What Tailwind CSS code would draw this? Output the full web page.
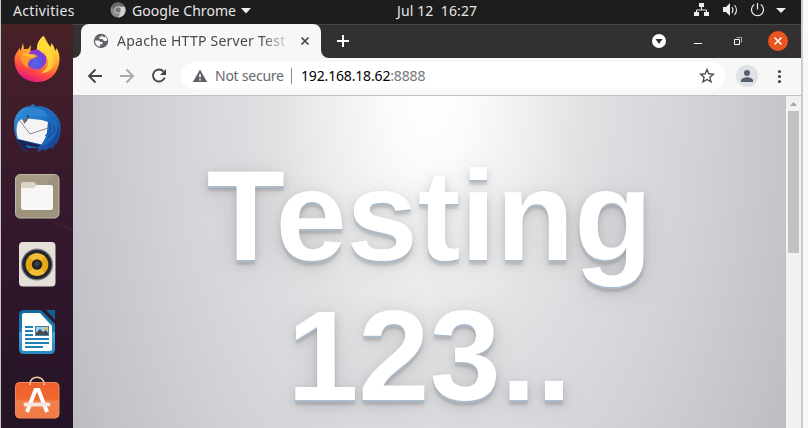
<!DOCTYPE html>
<html lang="en">
<head>
<meta charset="utf-8">
<title>Desktop</title>
<script src="https://cdn.jsdelivr.net/npm/@tailwindcss/browser@4"></script>
</head>
<body class="w-[808px] h-[428px] overflow-hidden bg-[#f8f8f8] font-['Noto_Sans','Open_Sans',sans-serif]">
<div class="w-[803px] h-[428px] flex flex-col border-l border-l-[#c3c7ca] border-r-2 border-r-[#cbcbcb] overflow-hidden">
  <header class="h-6 shrink-0 bg-[#1d1d1d] text-[#e6e6e6] text-[14px] leading-[21px] flex whitespace-pre">
    <span class="w-[97px] pl-3 tracking-[0.35px]">Activities</span>
    <div class="w-[299px] flex items-start pl-3">
      <svg class="w-4 h-4 mt-[2px] mr-[6px] shrink-0" viewBox="0 0 16 16"><circle cx="8" cy="8" r="7.5" fill="#8b8b8b"/><path d="M8 4.5h6.7A7.5 7.5 0 0 1 8 15.5l3.2-5.8Z" fill="#d0d0d0"/><path d="M1.5 4.2A7.5 7.5 0 0 1 14.7 4.5H8A3.6 3.6 0 0 0 4.9 9.8Z" fill="#686868"/><circle cx="8" cy="8" r="3.6" fill="#ddd"/><circle cx="8" cy="8" r="2.8" fill="#777"/></svg>
      <span class="w-[109px] tracking-[0.05px]">Google Chrome</span>
      <svg class="w-[10px] h-[6px] mt-[8px]" viewBox="0 0 10 6"><path d="M0 0h10L5 5.5z" fill="#eee"/></svg>
    </div>
    <span class="w-[296px] tracking-[0.1px]">Jul 12  16:27</span>
    <svg class="w-[106px] h-6 shrink-0" viewBox="693 0 106 24" fill="none" stroke="#eee">
      <path d="M701.5 6V10M696.500 13v-3h10v3" stroke-width="1"/><path d="M699 3h5v4h-5zM694 12h5v4h-5zM704 12h5v4h-5z" fill="#eee" stroke="none"/>
      <path d="M723 7h3l4-4v13l-4-4h-3z" fill="#eee" stroke="none"/><path d="M732 7q2 3 0 6M734.500 5q4 5 0 10" stroke-width="1.100"/>
      <path d="M754.300 4.600a6 6 0 1 0 6.400 0M757.500 3v6.500" stroke-width="1.200"/>
      <path d="M776 8h10l-5 5z" fill="#eee" stroke="none"/>
    </svg>
  </header>
  <div class="flex h-[404px]">
    <aside class="w-[72px] shrink-0 bg-linear-to-b from-[#482126] via-[#35182d] via-45% to-[#251426]">
      <svg class="w-[72px] h-[404px]" viewBox="1 24 72 404">
        <defs>
          <linearGradient id="fox" x1=".8" y1="0" x2=".4" y2="1"><stop stop-color="#ffee45"/><stop offset=".3" stop-color="#ffc932"/><stop offset=".6" stop-color="#ff8132"/><stop offset=".8" stop-color="#ff4548"/><stop offset="1" stop-color="#e21a80"/></linearGradient>
          <radialGradient id="globe" cx=".45" cy=".65" r=".6"><stop stop-color="#5366e0"/><stop offset=".55" stop-color="#6650dc"/><stop offset="1" stop-color="#9030d6"/></radialGradient>
          <linearGradient id="bird" x1="0" y1="0" x2="1" y2="1"><stop stop-color="#3897dd"/><stop offset=".5" stop-color="#1e6fc5"/><stop offset="1" stop-color="#173a82"/></linearGradient>
          <linearGradient id="bag" x1="0" y1="0" x2="0" y2="1"><stop stop-color="#ec602b"/><stop offset=".5" stop-color="#f0692f"/><stop offset=".51" stop-color="#f38049"/><stop offset="1" stop-color="#f07a45"/></linearGradient>
          <linearGradient id="doc" x1="0" y1="0" x2="0" y2="1"><stop stop-color="#0f6ba0"/><stop offset=".49" stop-color="#1b7fb8"/><stop offset=".5" stop-color="#45a5d7"/><stop offset="1" stop-color="#2589c1"/></linearGradient>
        </defs>
        <path d="M44 219l29 9v3z" fill="#542337" opacity=".6"/>
        <g>
          <path d="M23 43l1 6h4l3-4-.5 6 5 1 2-5c0-5 3-9 6-11 0 5 4 7 7 11l1-4c2 3 3 5 4 8l1-3c3 5 4 11 2 18-3 10-11 16-21 16-14 0-23-10-23-22 0-6 3-8 5-12l1 3z" fill="url(#fox)"/>
          <circle cx="36.500" cy="59.500" r="10" fill="url(#globe)"/>
          <path d="M37 47c1 4 5 5 8 8 6 7 3 14-4 18 8 0 13-5 14-11 1-6-2-11-5-15l-6-11c-4 3-7 7-7 11z" fill="#ffdc3c" opacity=".85"/>
          <path d="M50 50c5 7 3 16-3 21 8-4 11-13 3-21z" fill="#ffbb2e"/>
          <path d="M21 54c3-1 6-1 9 0 3 0 5 0 7 2 0 2-5 2-7 4-2 2-3 5-2 8-6-3-8-9-7-14z" fill="#ff992b"/>
          <path d="M22 54c4-2 8 0 14 2-3 2-8 2-14-2z" fill="#ffbd31"/>
        </g>
        <g>
          <path d="M14 125C14 114 21 107 30 106l3-2 2 2c12-1 22 7 25 16 2 8 0 17-4 23l-1-2-2 6-2-2-6 4-1-2-7 3 2-4h-8l-5 0 1 4C18 146 14 136 14 125z" fill="url(#bird)"/>
          <path d="M18 122l5-4 19 2 6 2c-1 8-1 18-4 23l-26-6c-2-6-2-12 0-17z" fill="#f4f4f5"/>
          <path d="M20 121l10 13 18-6" fill="none" stroke="#8d8e93" stroke-width="1"/>
          <path d="M17 139l26 7-7 1-10-2 2 6c-5-1-9-6-11-12z" fill="#1b2453"/>
          <path d="M26 108c7-2 17 0 23 6 4 6-1 8-1 13-1 9-4 15-9 20 12-3 19-12 19-22-2-12-14-21-26-19z" fill="#1c67b9"/>
          <path d="M22 120c0-8 5-12 11-12 8 0 13 4 14 9-7-2-13-1-17 1-3 1-5 3-8 2z" fill="#2c83cf"/>
          <path d="M23 120l6-3-2 4-3 3z" fill="#6f6869"/><circle cx="28" cy="116.500" r=".9" fill="#101e3b"/>
          <path d="M49 124l2 6-6 6M54 126l1 5-7 6M58 127l-1 9-9 9" fill="none" stroke="#123f83" stroke-width=".8"/>
        </g>
        <g>
          <rect x="15.500" y="174.500" width="43.500" height="43.500" rx="4.500" fill="#9d927b" stroke="#c0b8a6"/>
          <path d="M16 211l39-36H20q-4 0-4 4z" fill="#aaa08c" opacity=".6"/>
          <path d="M21 184q0-2 2-2h10q2 0 3 2l1 2h14v8H21z" fill="#d9d5cb"/>
          <path d="M21 190q0-2 2-2h11l3-3h14q2 0 2 2v21q0 2-2 2H23q-2 0-2-2z" fill="#f8f7f5"/>
        </g>
        <g>
          <rect x="19" y="242" width="36.500" height="44.500" rx="4" fill="#e4e0d7"/>
          <circle cx="37" cy="264.500" r="16" fill="#858890"/><circle cx="37" cy="264.500" r="14.800" fill="#25272f"/><circle cx="37" cy="264.500" r="11.300" fill="#e4aa16"/><path d="M29 256.500a11.300 11.300 0 0 1 16 0l-8 8zM29 272.500a11.300 11.300 0 0 0 16 0l-8-8z" fill="#f1bf35"/><circle cx="37" cy="264.500" r="5.200" fill="#242424"/><circle cx="37" cy="264" r="2.500" fill="#414141"/>
        </g>
        <g>
          <path d="M24 310h17l14 14v25q0 5-5 5H24q-5 0-5-5v-34q0-5 5-5z" fill="url(#doc)"/>
          <path d="M46 310h9v10z" fill="#14608e"/>
          <path d="M24 313h16l12 13v23q0 2-2 2H24q-2 0-2-2v-34q0-2 2-2z" fill="#fff"/>
          <path d="M25 327h8M25 331h8M25 335h8M25 339h24M25 343h24M25 347h18" stroke="#1f80b8" stroke-width="1.800"/>
          <rect x="35.500" y="326.500" width="13" height="9" fill="#9fcdec" stroke="#4a80a2"/><path d="M36 335v-2l4-4 3 3 3-2 2 3v2z" fill="#454b50"/><circle cx="46.500" cy="328.500" r="1.500" fill="#f4c21c"/>
        </g>
        <g>
          <path d="M30 385v-1c0-9 14-9 14 0v1" fill="none" stroke="#ecd0a2" stroke-width="1.500"/>
          <rect x="15.500" y="382.500" width="43.500" height="35.500" rx="4" fill="url(#bag)" stroke="#f28b5c"/>
          <path d="M30 383v2M44 383v2" stroke="#f4d8b0" stroke-width="1.500"/>
          <path d="M27 412L35.500 390h3L47 412" fill="none" stroke="#fff" stroke-width="4"/>
          <path d="M25.500 404.500h23" stroke="#f5e5dc" stroke-width="4" stroke-linecap="round"/>
        </g>
      </svg>
    </aside>
    <main class="w-[728px] shrink-0">
      <div class="h-[34px] bg-[#333031] border-t border-[#484646] flex">
        <div class="w-2 h-[33px] bg-[#f7f7f7]"><div class="w-2 h-[33px] bg-[#333031] rounded-br-[8px]"></div></div>
        <div class="-mt-px w-[240px] h-[34px] bg-[#f7f7f7] rounded-t-[8px] flex items-center pl-3">
          <svg class="w-[16px] h-[16px] mr-2 shrink-0" viewBox="0 0 16 16"><circle cx="8" cy="8" r="7.200" fill="#5f6368"/><path d="M2 7.500h3.500q1.500 0 2 1.500h2v2.200h-2.500v2.600q-5-.8-5-6.300zM8.500 2.200v1.500H6.500v2.300h3q1 2 2 2h2.300q.8-3.200-1.600-4.600l-1 1.100z" fill="#f7f7f7"/></svg>
          <span class="w-[176px] pb-px overflow-hidden whitespace-nowrap text-[14px] text-[#46494d] tracking-[0.24px] [mask-image:linear-gradient(to_right,black_82%,transparent_99%)]">Apache HTTP Server Test Page</span>
          <svg class="w-[10px] h-[10px] ml-[7px]" viewBox="0 0 10 10"><path d="M1.500 1.500l7 7M8.500 1.500l-7 7" stroke="#414548" stroke-width="1.700"/></svg>
        </div>
        <div class="w-2 h-[33px] bg-[#f7f7f7]"><div class="w-2 h-[33px] bg-[#333031] rounded-bl-[8px]"></div></div>
        <svg class="w-[472px] h-[33px]" viewBox="329 25 472 33" fill="none" stroke="#fff">
          <path d="M337 41h12M343 35v12" stroke-width="2"/>
          <circle cx="659" cy="41" r="7" fill="#fff" stroke="none"/><path d="M655.500 39h7l-3.500 5z" fill="#333031" stroke="none"/>
          <path d="M694 43.500h8"/>
          <path d="M736.500 37.500h5v5" stroke="#aaa"/><path d="M734.500 39.500h5v5h-5z"/>
          <circle cx="778" cy="41" r="10" fill="#e95420" stroke="none"/><path d="M774.500 37.500l7 7M781.500 37.500l-7 7" stroke-width="1.500"/>
        </svg>
      </div>
      <div class="h-[38px] bg-[#f7f7f7] border-b border-[#c0c0c1] flex pt-1">
        <svg class="w-[108px] h-7" viewBox="73 62 108 28" fill="none" stroke-width="1.900">
          <path d="M102 76H89M95.500 69.500L89 76l6.500 6.500" stroke="#434548"/><path d="M120 76h13M126.500 69.500L133 76l-6.500 6.500" stroke="#a7a9ab"/><path d="M163.500 71.500a6 6 0 1 0 1.200 6" stroke="#434548"/><path d="M166 69v6h-6z" fill="#434548"/>
        </svg>
        <div class="w-[544px] h-7 bg-white rounded-full flex items-center pl-[11px] pr-[10px] text-[14px] whitespace-nowrap">
          <svg class="w-4 h-[14px] mr-[7px] shrink-0" viewBox="0 0 16 14"><path d="M8 .5L15.200 13H.8z" fill="#5f6368"/><path d="M8 5v3.500M8 10v1.500" stroke="#fff" stroke-width="1.500"/></svg>
          <span class="w-[76px] pb-px text-[#66696d] tracking-[-0.25px]">Not secure</span>
          <span class="w-[10px] h-4 border-l border-[#8a8c8f]"></span>
          <span class="pb-px text-black tracking-[-0.16px] grow">192.168.18.62<span class="text-[#73767a]">:8888</span></span>
          <svg class="w-4 h-4" viewBox="0 0 16 16"><path d="M8 1.500l1.800 4.300 4.700.4-3.600 3.100 1.100 4.600L8 11.500l-4 2.400 1.100-4.600-3.600-3.100 4.700-.4z" fill="none" stroke="#494c50" stroke-width="1.400"/></svg>
        </div>
        <svg class="w-[76px] h-7" viewBox="725 62 76 28"><circle cx="747" cy="76" r="11" fill="#dee1e6"/><circle cx="747" cy="73" r="3" fill="#555d70"/><path d="M741 82v-1c0-5 12-5 12 0v1z" fill="#555d70"/><g fill="#43464a"><circle cx="779.500" cy="71.500" r="1.600"/><circle cx="779.500" cy="76.500" r="1.600"/><circle cx="779.500" cy="81.500" r="1.600"/></g></svg>
      </div>
      <div class="flex h-[332px]">
        <section class="w-[713px] h-[332px] pt-[50px] bg-[radial-gradient(ellipse_505px_850px_at_357px_0px,#fff_0%,#fbfbfb_8%,#ececed_22%,#e2e2e4_30%,#d9d9de_42%,#d2d1d7_54%,#c5c4cb_71%,#babcc1_82%,#b6b8bd_100%)]">
          <h1 class="font-['Liberation_Sans',sans-serif] font-bold text-[128px] leading-[140px] text-center text-white [text-shadow:0_2px_0_#aabbcc,0_4px_10px_rgba(0,0,0,0.15),0_5px_2px_rgba(0,0,0,0.1),0_6px_30px_rgba(0,0,0,0.1)]">Testing<br>123..</h1>
        </section>
        <div class="w-[15px] bg-[#f1f1f1] px-[2px]">
          <svg class="w-[11px] h-[15px]" viewBox="0 0 11 15"><path d="M2 10l3.500-4L9 10z" fill="#a3a3a3"/></svg>
          <div class="w-[11px] h-[142px] bg-[#c1c1c1]"></div>
        </div>
      </div>
    </main>
  </div>
</div>
</body>
</html>
